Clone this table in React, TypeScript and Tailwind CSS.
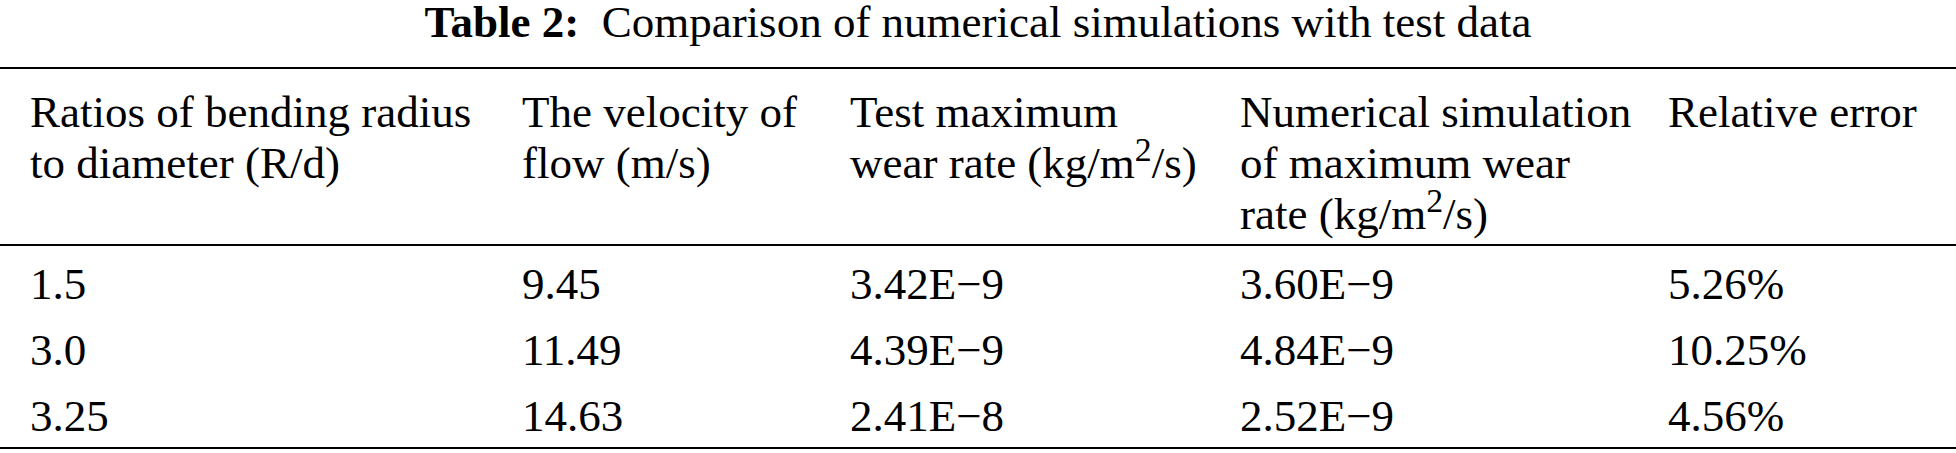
const header = [
  <>Ratios of bending radius<br />to diameter (R/d)</>,
  <>The velocity of<br />flow (m/s)</>,
  <>Test maximum<br />wear rate (kg/m<sup>2</sup>/s)</>,
  <>Numerical simulation<br />of maximum wear<br />rate (kg/m<sup>2</sup>/s)</>,
  <>Relative error</>,
];

const rows = [
  ["1.5", "9.45", "3.42E\u22129", "3.60E\u22129", "5.26%"],
  ["3.0", "11.49", "4.39E\u22129", "4.84E\u22129", "10.25%"],
  ["3.25", "14.63", "2.41E\u22128", "2.52E\u22129", "4.56%"],
];

export default function App() {
  return (
    <div className="w-[1956px] h-[453px] bg-white text-black font-['Liberation_Serif','Times_New_Roman',serif] text-[45px] overflow-hidden">
      <p className="text-center leading-[44px] whitespace-nowrap">
        <b>Table 2:</b>&nbsp; Comparison of numerical simulations with test data
      </p>

      <div className="mt-[23px] border-t-2 border-b-2 border-black pb-[3px]">
        <div className="grid grid-cols-[522px_328px_390px_428px_1fr] border-b-2 border-black pt-[18px] pb-[4px] leading-[51px]">
          {header.map((h, i) => (
            <div key={i} className={i === 0 ? "pl-[30px] whitespace-nowrap" : "whitespace-nowrap"}>
              {h}
            </div>
          ))}
        </div>

        {rows.map((r) => (
          <div
            key={r[0]}
            className="grid grid-cols-[522px_328px_390px_428px_1fr] pt-[14px] pb-[3px] leading-[49px]"
          >
            {r.map((c, i) => (
              <div key={i} className={i === 0 ? "pl-[30px]" : ""}>
                {c}
              </div>
            ))}
          </div>
        ))}
      </div>
    </div>
  );
}
